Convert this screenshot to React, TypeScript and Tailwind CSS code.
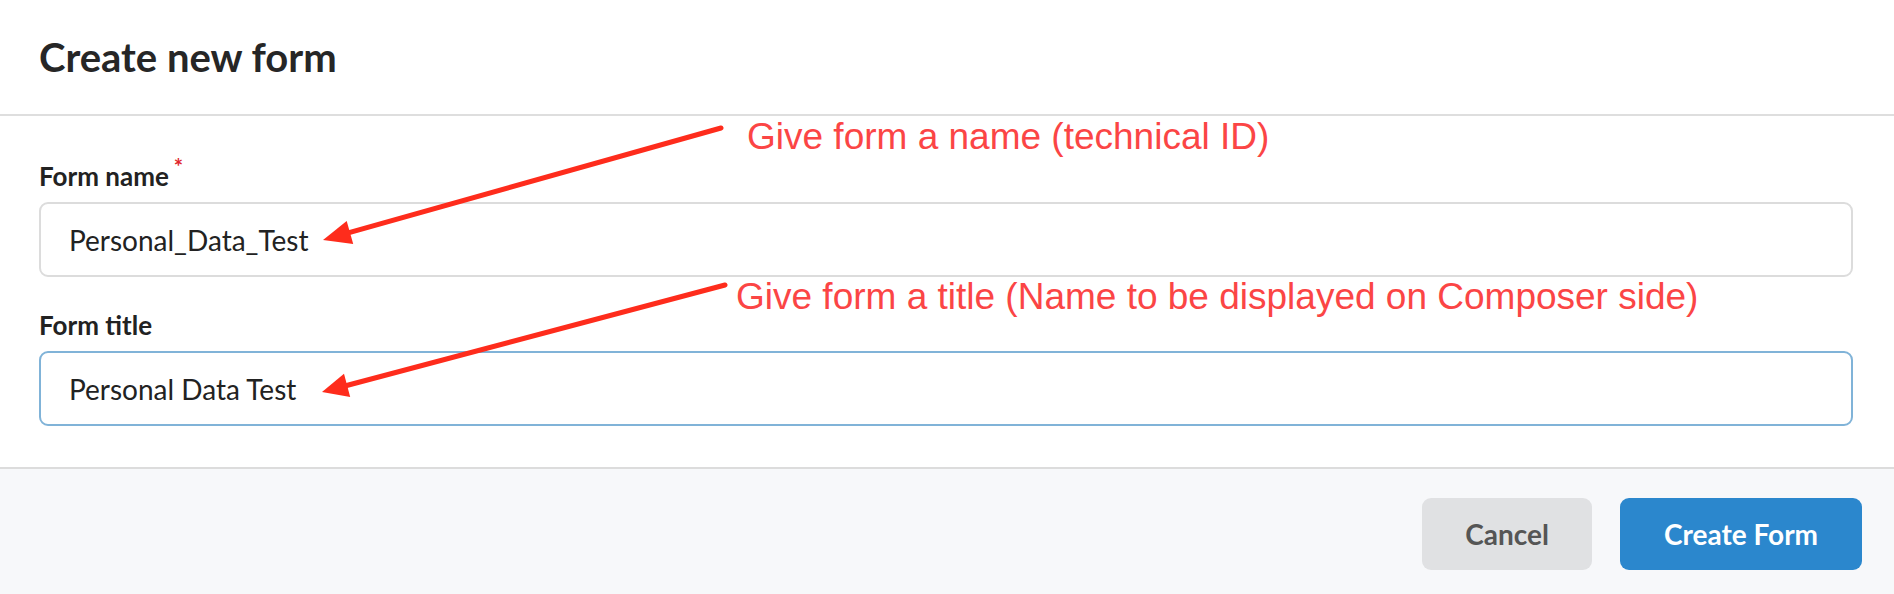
import React from "react";

export default function App() {
  return (
    <div className="relative w-[1894px] h-[594px] bg-white font-['Lato',_'Noto_Sans',_sans-serif] text-[#222] overflow-hidden">
      <div className="flex flex-col h-full">
        {/* Header */}
        <div className="h-[116px] shrink-0 flex items-center px-[39px] border-b-2 border-[#dedede]">
          <h1 className="text-[40px] leading-none font-bold text-[#262626]">Create new form</h1>
        </div>

        {/* Body */}
        <div className="h-[351px] shrink-0 pl-[39px] pr-[41px] pt-[44px]">
          <div className="h-[32px] leading-[32px] text-[26px] font-bold text-[#222] mb-[10px] flex">
            <span>Form name</span>
            <span className="text-[#e0262b] text-[22px] leading-none ml-[5px] mt-[-4px]">*</span>
          </div>
          <div className="h-[75px] rounded-[9px] border-2 border-[#dcdcdc] bg-white flex items-center pl-[28px] pt-[3px]">
            <span className="text-[28px] leading-[1.2] text-[#222]">Personal_Data_Test</span>
          </div>

          <div className="mt-[32px] h-[32px] leading-[32px] text-[26px] font-bold text-[#222] mb-[10px]">
            Form title
          </div>
          <div className="h-[75px] rounded-[9px] border-2 border-[#80b3d8] bg-white flex items-center pl-[28px] pt-[3px]">
            <span className="text-[28px] leading-[1.2] text-[#222]">Personal Data Test</span>
          </div>
        </div>

        {/* Footer */}
        <div className="flex-1 bg-[#f7f8fa] border-t-2 border-[#dcdcdc] flex justify-end items-start pt-[29px] pr-[32px] gap-[28px]">
          <button className="w-[170px] h-[72px] rounded-[9px] bg-[#e0e1e3] text-[#555] text-[28px] font-bold">
            Cancel
          </button>
          <button className="w-[242px] h-[72px] rounded-[9px] bg-[#2b87cd] text-white text-[28px] font-bold">
            Create Form
          </button>
        </div>
      </div>

      {/* Annotations */}
      <span className="absolute left-[747px] top-[118px] text-[37px] leading-none text-[#fb4545] font-['Liberation_Sans',_Arial,_sans-serif] whitespace-nowrap">
        Give form a name (technical ID)
      </span>
      <span className="absolute left-[736px] top-[278px] text-[37px] leading-none text-[#fb4545] font-['Liberation_Sans',_Arial,_sans-serif] whitespace-nowrap">
        Give form a title (Name to be displayed on Composer side)
      </span>
      <svg className="absolute left-0 top-0 pointer-events-none" width="1894" height="594" viewBox="0 0 1894 594">
        <line x1="721" y1="128" x2="342" y2="234.6" stroke="#fe2c1c" strokeWidth="5" strokeLinecap="round" />
        <polygon points="323,240 353.2,244 346.7,220.9" fill="#fe2c1c" />
        <line x1="725" y1="285" x2="341" y2="387" stroke="#fe2c1c" strokeWidth="5" strokeLinecap="round" />
        <polygon points="322,392 350.2,396.9 344,373.7" fill="#fe2c1c" />
      </svg>
    </div>
  );
}
